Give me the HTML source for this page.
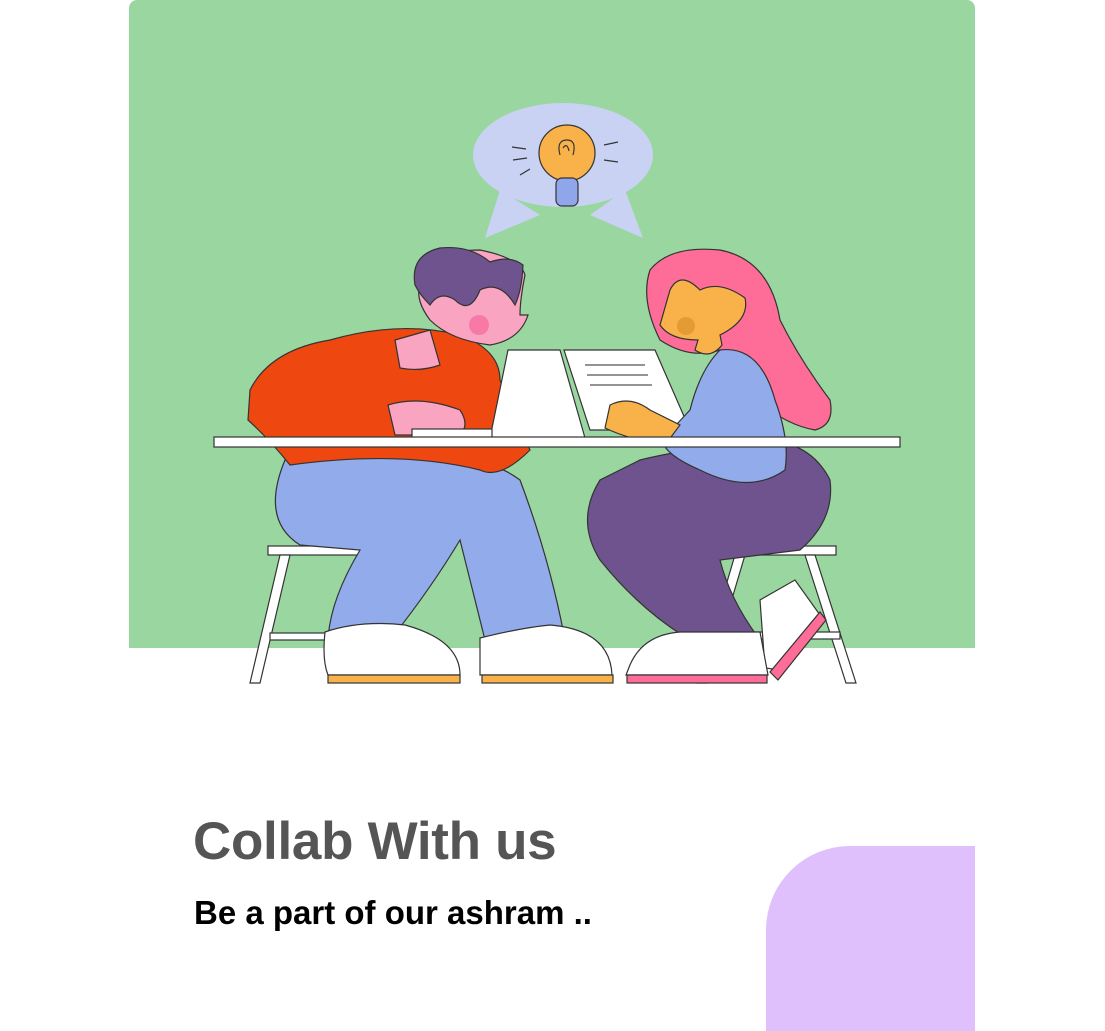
<!DOCTYPE html>
<html><head><meta charset="utf-8"><style>
html,body{margin:0;padding:0;background:#fff;width:1105px;height:1031px;overflow:hidden;position:relative;font-family:"Liberation Sans",sans-serif}
.green{position:absolute;left:129px;top:0;width:846px;height:648px;background:#9AD6A0;border-top-left-radius:8px;border-top-right-radius:8px}
.blob{position:absolute;left:766px;top:846px;width:209px;height:185px;background:#DFC0FC;border-top-left-radius:84px}
h1{position:absolute;left:193px;top:811px;margin:0;font-size:53px;font-weight:700;color:#555;letter-spacing:-0.3px}
p{position:absolute;left:194px;top:894px;margin:0;font-size:33px;font-weight:700;color:#000}
svg{position:absolute;left:0;top:0}
</style></head><body>
<div class="green"></div>
<div class="blob"></div>
<svg width="1105" height="1031" stroke="#333" stroke-width="1.2">
<ellipse cx="563" cy="155" rx="90" ry="52" fill="#C9D2F3" stroke="none"/>
<polygon points="500,190 485,238 540,215" fill="#C9D2F3" stroke="none"/>
<polygon points="625,190 643,238 590,215" fill="#C9D2F3" stroke="none"/>
<circle cx="567" cy="153" r="28" fill="#F9B24A"/>
<rect x="556" y="178" width="22" height="28" rx="6" fill="#8FA6EA"/>
<path d="M560 155 q-4 -15 7 -15 q10 0 6 15 M563 148 q4 -6 6 3" fill="none"/>
<path d="M512 147 l14 2 M513 160 l14 -2 M520 175 l10 -6 M604 145 l14 -3 M604 160 l14 2" fill="none"/>
<rect x="268" y="546" width="115" height="9" fill="#fff"/>
<path d="M280 555 L250 683 h10 L290 555 Z M358 555 L372 640 h8 L368 555Z" fill="#fff"/>
<rect x="270" y="633" width="110" height="7" fill="#fff"/>
<rect x="715" y="546" width="121" height="9" fill="#fff"/>
<path d="M735 555 L697 683 h10 L745 555Z M805 555 L846 683 h10 L815 555Z" fill="#fff"/>
<rect x="700" y="632" width="140" height="7" fill="#fff"/>
<path d="M285 460 Q260 520 300 545 L360 550 Q330 600 328 640 L390 640 Q430 590 460 540 L485 640 L565 640 Q550 560 520 480 Q480 450 400 455 Z" fill="#91ABEB"/>
<path d="M250 390 Q270 350 330 340 Q400 320 460 335 Q500 350 500 380 L530 450 Q500 480 480 470 Q400 450 290 465 Q270 440 248 420 Z" fill="#EE4710"/>
<path d="M395 340 L430 330 L440 365 Q420 372 400 368 Z" fill="#F9A4C1"/>
<path d="M420 270 Q440 250 480 250 Q520 258 525 275 Q520 300 520 315 L528 315 Q520 340 490 345 Q450 340 430 320 Q415 300 420 285 Z" fill="#F9A4C1"/>
<path d="M415 285 Q410 255 440 248 Q470 245 490 262 Q510 255 523 265 Q522 290 515 305 Q500 280 480 290 Q470 315 455 300 Q440 290 430 305 Q420 295 415 285Z" fill="#6F538E"/>
<circle cx="479" cy="325" r="10" fill="#F879A6" stroke="none"/>
<path d="M388 405 Q420 395 460 410 Q470 425 460 435 L395 435 Z" fill="#F9A4C1"/>
<path d="M508 350 L560 350 L585 438 L490 438 Z" fill="#fff"/>
<path d="M564 350 L655 350 L690 430 L590 430 Z" fill="#fff"/>
<path d="M585 365 L645 365 M587 375 L648 375 M590 385 L652 385" stroke="#555"/>
<rect x="412" y="429" width="80" height="9" fill="#fff"/>
<path d="M600 480 Q575 520 600 560 Q640 610 690 640 L760 640 Q730 600 720 560 L800 550 Q835 520 830 480 Q810 440 760 440 Q680 450 640 460 Z" fill="#6F538E"/>
<path d="M760 600 L795 580 L820 615 L780 670 L765 668 Z" fill="#fff"/>
<path d="M650 270 Q670 245 720 250 Q770 260 780 320 Q800 360 830 400 Q835 425 815 430 Q760 420 720 350 Q690 360 660 340 Q640 300 650 270Z" fill="#FE6C98"/>
<path d="M670 290 Q680 270 700 290 Q720 280 745 298 Q750 320 720 335 L722 345 Q710 360 695 350 L698 340 Q670 340 660 325 Z" fill="#F9B24A"/>
<circle cx="686" cy="326" r="9" fill="#E49B34" stroke="none"/>
<path d="M720 350 Q760 345 775 400 Q790 440 785 470 Q750 495 700 470 Q665 455 662 440 L690 410 Q700 370 720 350Z" fill="#91ABEB"/>
<path d="M610 405 Q630 395 650 410 L680 425 L665 445 Q630 440 605 428 Z" fill="#F9B24A"/>
<rect x="214" y="437" width="686" height="10" fill="#fff"/>
<path d="M325 632 Q360 620 405 625 Q460 640 460 675 L328 675 Q322 660 325 632Z" fill="#fff"/>
<rect x="328" y="675" width="132" height="8" fill="#F9B24A"/>
<path d="M480 638 Q520 628 550 625 Q610 630 612 675 L480 675 Z" fill="#fff"/>
<rect x="482" y="675" width="131" height="8" fill="#F9B24A"/>
<path d="M628 670 Q640 635 680 632 L760 632 L768 675 L626 675 Z" fill="#fff"/>
<rect x="627" y="675" width="140" height="8" fill="#FE6C98"/>
<path d="M770 672 L820 612 L826 620 L778 680Z" fill="#FE6C98"/>
</svg>
<h1>Collab With us</h1>
<p>Be a part of our ashram ..</p>
</body></html>
